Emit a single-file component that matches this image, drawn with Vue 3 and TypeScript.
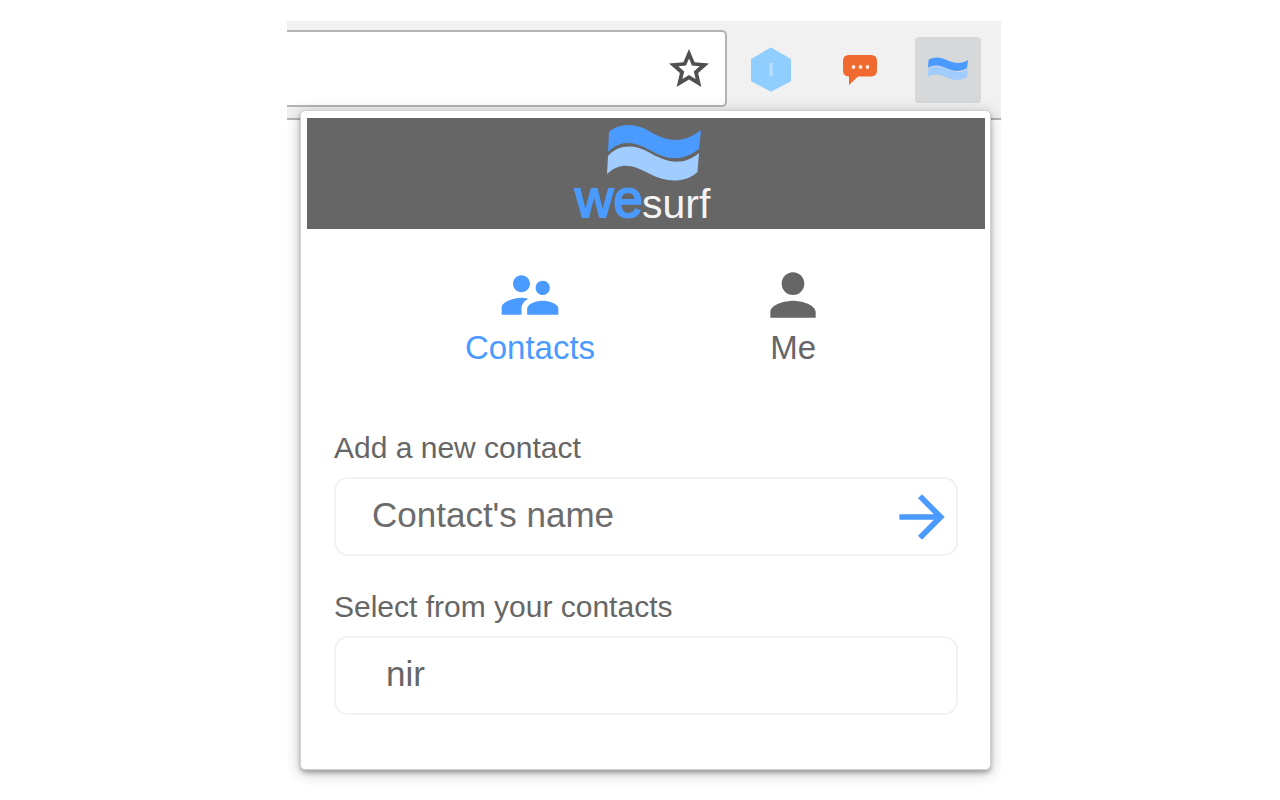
<script setup lang="ts">
import { ref } from 'vue'

type Tab = 'contacts' | 'me'

const activeTab = ref<Tab>('contacts')
const address = ref('')
const newContact = ref('')
const contacts = ref<string[]>(['nir'])

function addContact(): void {
  const name = newContact.value.trim()
  if (name) {
    contacts.value.push(name)
    newContact.value = ''
  }
}
</script>

<template>
  <div class="page">
    <div class="browser">
      <header class="toolbar">
        <div class="address">
          <input v-model="address" class="address-input" type="text" aria-label="Address" />
          <button class="star" type="button" aria-label="Bookmark this page">
            <svg viewBox="0 0 24 24" width="48" height="48" fill="#505050">
              <path d="M22 9.24l-7.19-.62L12 2 9.19 8.63 2 9.24l5.46 4.73L5.82 21 12 17.27 18.18 21l-1.63-7.03L22 9.24zM12 15l-3.3 2 .9-3.8-2.95-2.55 3.9-.35L12 6.8l1.45 3.5 3.9.35-2.95 2.55.9 3.8L12 15z" />
            </svg>
          </button>
        </div>
        <div class="extensions">
          <button class="extension" type="button" aria-label="Hexagon extension">
            <svg viewBox="0 0 66 66" width="66" height="66">
              <path d="M32 11.5L51 22.5V43.5L32 53.5L13 43.5V22.5Z" fill="#90ceff" stroke="#90ceff" stroke-width="2" stroke-linejoin="round" />
              <path d="M32 26V39" stroke="#bcdfff" stroke-width="3" />
            </svg>
          </button>
          <button class="extension" type="button" aria-label="Chat extension">
            <svg viewBox="0 0 66 66" width="66" height="66">
              <path d="M22 18H44Q50 18 50 24V33Q50 39.500 44 39.500H31L22 48V39.500Q16 39.500 16 33V24Q16 18 22 18Z" fill="#f06a30" />
              <g fill="#ffe9df">
                <circle cx="26.500" cy="30" r="1.900" />
                <circle cx="33.500" cy="30" r="1.900" />
                <circle cx="40.500" cy="30" r="1.900" />
              </g>
            </svg>
          </button>
          <button class="extension active" type="button" aria-label="Wesurf extension">
            <svg viewBox="0 0 66 66" width="66" height="66">
              <path d="M13.500 23C28 14 37 33 53 23L52 31C36 41 27 22 13 31Z" fill="#a0ccff" transform="translate(0 9)" />
              <path d="M13.500 23C28 14 37 33 53 23L52 31C36 41 27 22 13 31Z" fill="#4a9aff" />
            </svg>
          </button>
        </div>
      </header>

      <main class="popup">
        <div class="banner">
          <svg class="logo" viewBox="0 0 140 111" width="140" height="111" role="img" aria-label="wesurf">
            <path d="M36 14C46 5 62 5 76 13C91 22 108 28 128 12L126 31C112 43 94 43 78 34C61 25 49 21 35 34Z" fill="#4a9aff" />
            <path d="M35 38C45 26 62 26 76 34C91 43 108 50 126 35L124.500 54C113 65 93 65 77 56C60 47 48 43 34 56Z" fill="#a0ccff" />
            <path d="M35 35.500C48 22 62 25 77 33.500C93 43 110 46 126 32.500" fill="none" stroke="#666666" stroke-width="2.500" />
            <text class="logo-we" x="2" y="99">we</text>
            <text class="logo-surf" x="69" y="100">surf</text>
          </svg>
        </div>

        <nav class="tabs">
          <button class="tab" :class="{ selected: activeTab === 'contacts' }" type="button" @click="activeTab = 'contacts'">
            <svg viewBox="0 0 24 24" width="68" height="68" fill="currentColor">
              <path d="M16.5 12c1.38 0 2.49-1.12 2.49-2.5S17.88 7 16.5 7C15.12 7 14 8.12 14 9.5s1.12 2.500 2.500 2.500zM9 11c1.66 0 2.990-1.340 2.990-3S10.660 5 9 5C7.340 5 6 6.340 6 8s1.340 3 3 3zm7.500 3c-1.830 0-5.500.920-5.500 2.750V19h11v-2.250c0-1.830-3.670-2.750-5.500-2.750zM9 13c-2.330 0-7 1.170-7 3.500V19h7v-2.250c0-.850.330-2.340 2.370-3.470C10.500 13.100 9.660 13 9 13z" />
            </svg>
            <span>Contacts</span>
          </button>
          <button class="tab" :class="{ selected: activeTab === 'me' }" type="button" @click="activeTab = 'me'">
            <svg viewBox="0 0 24 24" width="68" height="68" fill="currentColor">
              <path d="M12 12c2.210 0 4-1.790 4-4s-1.790-4-4-4-4 1.790-4 4 1.790 4 4 4zm0 2c-2.670 0-8 1.340-8 4v2h16v-2c0-2.660-5.330-4-8-4z" />
            </svg>
            <span>Me</span>
          </button>
        </nav>

        <form class="section" @submit.prevent="addContact">
          <label class="caption" for="contact-name">Add a new contact</label>
          <div class="field">
            <input id="contact-name" v-model="newContact" class="field-input" type="text" placeholder="Contact's name" />
            <button class="submit" type="submit" aria-label="Add contact">
              <svg viewBox="0 0 24 24" width="68" height="68" fill="#4a9aff">
                <path d="M12 4l-1.410 1.410L16.170 11H4v2h12.170l-5.580 5.590L12 20l8-8z" />
              </svg>
            </button>
          </div>
        </form>

        <section class="section">
          <h2 class="caption">Select from your contacts</h2>
          <ul class="contacts">
            <li v-for="(contact, index) in contacts" :key="index">
              <button class="field contact" type="button">{{ contact }}</button>
            </li>
          </ul>
        </section>
      </main>
    </div>
  </div>
</template>

<style>
body {
  margin: 0;
  background: #ffffff;
}
</style>

<style scoped>
.page {
  padding: 21px 0 14px 8px;
  font-family: "Liberation Sans", Arial, sans-serif;
  color: #666666;
}

.page *,
.page {
  box-sizing: border-box;
}

button,
input {
  margin: 0;
  padding: 0;
  border: 0;
  background: transparent;
  font: inherit;
  color: inherit;
}

button {
  cursor: pointer;
}

svg {
  display: block;
}

.browser {
  max-width: 714px;
  margin: 0 auto;
  overflow: hidden;
}

.toolbar {
  display: flex;
  align-items: flex-start;
  gap: 12px;
  padding: 9px 20px 11px 0;
  border-bottom: 2px solid #b4b4b4;
  background: #f1f1f1;
}

.address {
  display: flex;
  flex: 1;
  align-items: center;
  min-width: 0;
  height: 77px;
  padding-right: 12px;
  border: 2px solid #b4b4b4;
  border-left: 0;
  border-radius: 0 5px 5px 0;
  background: #ffffff;
}

.address-input {
  flex: 1;
  min-width: 0;
  height: 100%;
  padding-left: 16px;
  font-size: 30px;
  outline: none;
}

.extensions {
  display: flex;
  gap: 22px;
  padding-top: 7px;
}

.extension {
  width: 66px;
  height: 66px;
  border-radius: 4px;
}

.extension.active {
  background: #d7d8da;
}

.popup {
  position: relative;
  margin: -10px 10px 15px 13px;
  padding: 7px 5px 54px 6px;
  border: 1px solid #d0d0d0;
  border-radius: 5px;
  background: #ffffff;
  box-shadow: 0 3px 4px rgba(0, 0, 0, 0.26), 0 3px 16px rgba(0, 0, 0, 0.24);
}

.banner {
  display: flex;
  justify-content: center;
  padding-right: 6px;
  background: #666666;
}

.logo-we {
  font-size: 53px;
  fill: #4a9aff;
  stroke: #4a9aff;
  stroke-width: 2px;
}

.logo-surf {
  font-size: 41px;
  fill: #f4f4f4;
}

.tabs {
  display: flex;
  justify-content: center;
  gap: 164px;
  padding: 32px 22px 64px;
}

.tab {
  display: flex;
  flex-direction: column;
  align-items: center;
  font-size: 33px;
  line-height: 38px;
}

.tab.selected {
  color: #4a9aff;
}

.section {
  padding: 0 27px;
}

.section + .section {
  padding-top: 34px;
}

.caption {
  display: block;
  margin: 0 0 12px;
  font-size: 30px;
  font-weight: 400;
  line-height: 34px;
}

.field {
  display: flex;
  align-items: center;
  width: 100%;
  height: 79px;
  border: 2px solid #f2f2f2;
  border-radius: 14px;
  font-size: 35px;
}

.field-input {
  flex: 1;
  min-width: 0;
  height: 100%;
  padding: 0 0 4px 36px;
  outline: none;
}

.field-input::placeholder {
  color: #6c6c6c;
  opacity: 1;
}

.submit {
  flex: none;
}

.contacts {
  display: flex;
  flex-direction: column;
  gap: 12px;
  margin: 0;
  padding: 0;
  list-style: none;
}

.contact {
  padding: 0 50px 4px;
  text-align: left;
}
</style>
